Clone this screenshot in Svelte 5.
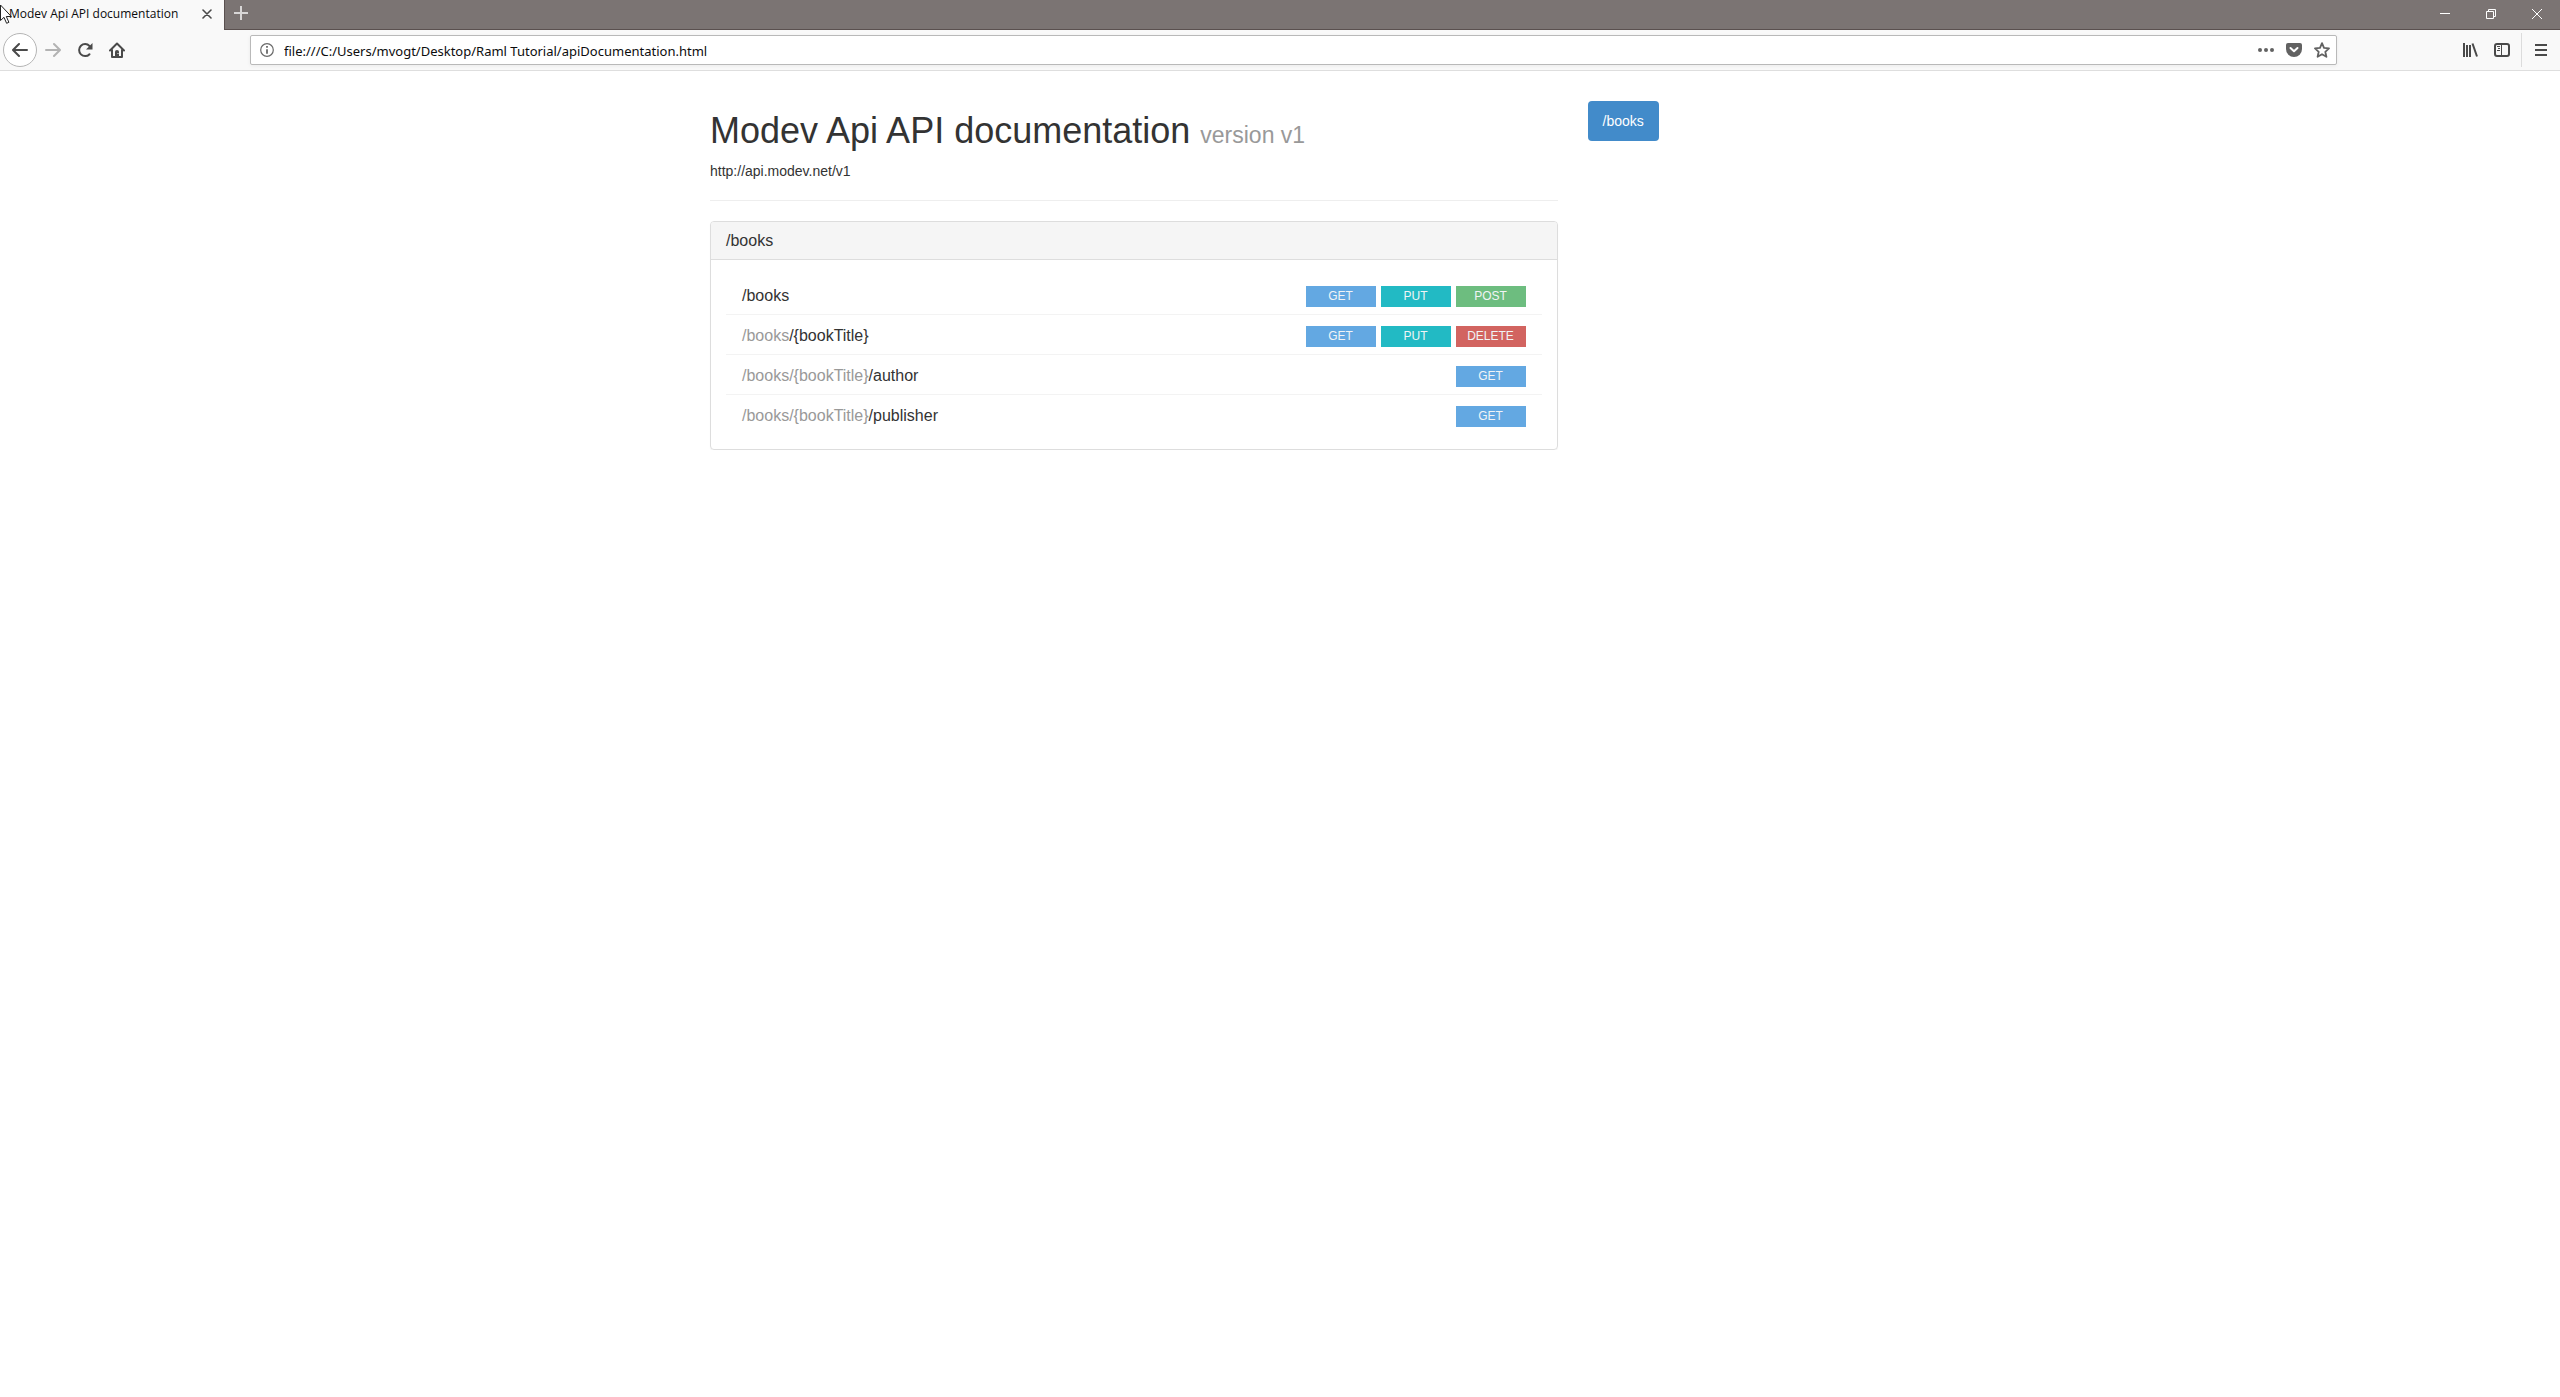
<script>
  const resources = [
    { parent: '', path: '/books', methods: ['GET', 'PUT', 'POST'] },
    { parent: '/books', path: '/{bookTitle}', methods: ['GET', 'PUT', 'DELETE'] },
    { parent: '/books/{bookTitle}', path: '/author', methods: ['GET'] },
    { parent: '/books/{bookTitle}', path: '/publisher', methods: ['GET'] }
  ];
  let address = $state('file:///C:/Users/mvogt/Desktop/Raml Tutorial/apiDocumentation.html');
</script>

<div class="browser">
  <header>
    <div class="tabs">
      <div class="tab">
        <span class="tab-title">Modev Api API documentation</span>
        <button class="tab-close" aria-label="Close tab">
          <svg width="10" height="10" viewBox="0 0 10 10"><path d="M1 1l8 8M9 1l-8 8" stroke="#4a4a4a" stroke-width="1.6" stroke-linecap="round" /></svg>
        </button>
      </div>
      <div class="strip">
        <button class="new-tab" aria-label="New tab">
          <svg width="14" height="14" viewBox="0 0 14 14"><path d="M7 0v14M0 7h14" stroke="#d8d6d6" stroke-width="2" /></svg>
        </button>
        <div class="window-buttons">
          <button aria-label="Minimize">
            <svg width="10" height="10" viewBox="0 0 10 10"><path d="M0 4.5h10" stroke="#fff" /></svg>
          </button>
          <button aria-label="Restore">
            <svg width="10" height="10" viewBox="0 0 10 10" fill="none" stroke="#fff"><path d="M.5 2.5h7v7h-7zM2.500 2.500V.5h7v7h-2" /></svg>
          </button>
          <button aria-label="Close window">
            <svg width="10" height="10" viewBox="0 0 10 10"><path d="M0 0l10 10M10 0L0 10" stroke="#fff" /></svg>
          </button>
        </div>
      </div>
    </div>

    <div class="toolbar">
      <nav class="history" aria-label="Browser navigation">
        <button class="back" aria-label="Back">
          <svg width="16" height="16" viewBox="0 0 16 16" fill="none" stroke="#4a4a4a" stroke-width="2" stroke-linecap="round" stroke-linejoin="round"><path d="M15 8H1.500M7 2L1 8l6 6" /></svg>
        </button>
        <button aria-label="Forward">
          <svg width="16" height="16" viewBox="0 0 16 16" fill="none" stroke="#b3b3b3" stroke-width="2" stroke-linecap="round" stroke-linejoin="round"><path d="M1 8h13.500M9 2l6 6-6 6" /></svg>
        </button>
        <button aria-label="Reload">
          <svg width="16" height="16" viewBox="0 0 16 16"><path d="M12.500 12.200A6 6 0 1 1 12.500 4" fill="none" stroke="#4a4a4a" stroke-width="2" stroke-linecap="round" /><path d="M15.500 1v6.500H9z" fill="#4a4a4a" /></svg>
        </button>
        <button aria-label="Home">
          <svg width="16" height="16" viewBox="0 0 16 16"><path d="M1 8.500L8 1.500l7 7M3 8v7h10V8" fill="none" stroke="#4a4a4a" stroke-width="2" stroke-linecap="round" stroke-linejoin="round" /><path d="M6 15V9.500Q6 8 8 8t2 1.500V15z" fill="#4a4a4a" /><path d="M8.500 11.500h1" stroke="#f9f9f9" /></svg>
        </button>
      </nav>

      <div class="urlbar">
        <svg width="14" height="14" viewBox="0 0 14 14" aria-hidden="true"><circle cx="7" cy="7" r="6.300" fill="none" stroke="#6a6a6a" stroke-width="1.200" /><path d="M7 6.200v4.600M7 3v1.800" stroke="#6a6a6a" stroke-width="1.800" /></svg>
        <input type="text" aria-label="Address" bind:value={address} />
        <div class="page-actions">
          <button aria-label="Page actions">
            <svg width="16" height="16" viewBox="0 0 16 16" fill="#626262"><circle cx="2" cy="8" r="2" /><circle cx="8" cy="8" r="2" /><circle cx="14" cy="8" r="2" /></svg>
          </button>
          <button aria-label="Save to Pocket">
            <svg width="16" height="16" viewBox="0 0 16 16"><path d="M2 1h12q2 0 2 2v4a8 8 0 0 1-16 0V3q0-2 2-2z" fill="#626262" /><path d="M4.500 6L8 9.300 11.500 6" fill="none" stroke="#fff" stroke-width="2" stroke-linecap="round" stroke-linejoin="round" /></svg>
          </button>
          <button aria-label="Bookmark this page">
            <svg width="16" height="16" viewBox="0 0 16 16"><path d="M8 1.200l2 4.700 5 .5-3.700 3.400 1.100 5L8 12.200l-4.400 2.600 1.100-5L1 6.400l5-.5z" fill="none" stroke="#626262" stroke-width="1.800" stroke-linejoin="round" /></svg>
          </button>
        </div>
      </div>

      <div class="tools">
        <button aria-label="Library">
          <svg width="16" height="16" viewBox="0 0 16 16" fill="none" stroke="#4a4a4a" stroke-width="2"><path d="M2 1v14M5 3v12M8 3v12M10.500 1.500l4.500 13" /></svg>
        </button>
        <button aria-label="Sidebars">
          <svg width="16" height="16" viewBox="0 0 16 16" fill="none" stroke="#4a4a4a"><rect x="1" y="2" width="14" height="12" rx="2" stroke-width="2" /><path d="M7.500 3v10M3 4.500h3M4 6.500h2M3 8.500h3" /></svg>
        </button>
        <span class="divider"></span>
        <button aria-label="Menu">
          <svg width="12" height="14" viewBox="0 0 12 14"><path d="M0 2h12M0 7h12M0 12h12" stroke="#4a4a4a" stroke-width="2" /></svg>
        </button>
      </div>
    </div>
    <svg class="pointer" width="13" height="20" viewBox="0 0 13 20" aria-hidden="true"><path d="M.5 1v15.500l3.500-3.200 2.600 6 2.300-1-2.600-5.800h5z" fill="#fff" stroke="#222" /></svg>
  </header>

  <div class="container">
    <main>
      <div class="page-header">
        <h1>Modev Api API documentation <small>version v1</small></h1>
        <p>http://api.modev.net/v1</p>
      </div>

      <section class="panel">
        <h2>/books</h2>
        <div class="panel-body">
          {#each resources as { parent, path, methods }}
            <div class="resource">
              <a class="path" href="#books"><span class="parent">{parent}</span>{path}</a>
              <div class="methods">
                {#each methods as method}
                  <button class="badge {method.toLowerCase()}">{method}</button>
                {/each}
              </div>
            </div>
          {/each}
        </div>
      </section>
    </main>

    <aside>
      <a class="pill" href="#books">/books</a>
    </aside>
  </div>
</div>

<style>
  :global(body) {
    margin: 0;
    background: #fff;
  }
  .browser {
    font: 14px/20px 'Liberation Sans', Arial, sans-serif;
    color: #333;
  }
  .browser * {
    box-sizing: border-box;
  }
  button {
    display: flex;
    align-items: center;
    justify-content: center;
    padding: 0;
    border: 0;
    background: none;
    font: inherit;
    color: inherit;
    flex: none;
  }
  svg {
    display: block;
    flex: none;
  }
  a {
    color: inherit;
    text-decoration: none;
  }

  header {
    position: relative;
    background: #f9f9f9;
    border-bottom: 1px solid #dedede;
  }
  .pointer {
    position: absolute;
    left: 0;
    top: 4px;
  }
  .tabs {
    display: flex;
    height: 30px;
  }
  .tab {
    display: flex;
    align-items: center;
    justify-content: space-between;
    width: 224px;
    padding: 0 8px 2px 9px;
    font: 12px/16px 'Open Sans', sans-serif;
    color: #0c0c0d;
    white-space: nowrap;
  }
  .tab-close {
    width: 18px;
    height: 18px;
  }
  .strip {
    flex: 1;
    display: flex;
    justify-content: space-between;
    background: #7b7473;
    border-bottom: 1px solid #5a504f;
    border-left: 1px solid #5a504f;
  }
  .new-tab {
    width: 32px;
    height: 26px;
  }
  .window-buttons {
    display: flex;
  }
  .window-buttons button {
    width: 46px;
    height: 28px;
  }

  .toolbar {
    display: flex;
    align-items: center;
    height: 40px;
    padding: 0 3px;
  }
  .history {
    display: flex;
    align-items: center;
    width: 247px;
  }
  .history button {
    width: 32px;
    height: 32px;
  }
  .history .back {
    width: 34px;
    height: 34px;
    border: 1px solid #b5b5b5;
    border-radius: 50%;
    background: #fff;
  }
  .urlbar {
    flex: 1;
    display: flex;
    align-items: center;
    height: 30px;
    padding: 0 6px 0 9px;
    gap: 10px;
    border: 1px solid #b9b9b9;
    border-radius: 2px;
    background: #fff;
    box-shadow: 0 1px 4px rgba(0, 0, 0, 0.06);
  }
  .urlbar input {
    flex: 1;
    min-width: 0;
    height: 26px;
    padding: 2px 0 0;
    border: 0;
    outline: 0;
    background: none;
    font: 13px/20px 'Noto Sans', sans-serif;
    color: #0c0c0d;
  }
  .page-actions {
    display: flex;
    gap: 12px;
  }
  .tools {
    display: flex;
    align-items: center;
    justify-content: flex-end;
    width: 220px;
  }
  .tools button {
    width: 32px;
    height: 32px;
  }
  .divider {
    width: 1px;
    height: 34px;
    margin: 0 3px;
    background: #dcdcdc;
  }

  .container {
    display: flex;
    max-width: 1170px;
    margin: 0 auto;
  }
  main {
    width: 75%;
    padding: 0 15px;
  }
  aside {
    width: 25%;
    padding: 30px 15px 0;
  }
  .page-header {
    margin: 40px 0 20px;
    padding-bottom: 19px;
    border-bottom: 1px solid #eee;
  }
  h1 {
    margin: 0 0 10px;
    font-size: 36px;
    line-height: 40px;
    font-weight: 400;
  }
  h1 small {
    font-size: 23px;
    line-height: 23px;
    color: #999;
  }
  p {
    margin: 0;
  }
  .panel {
    border: 1px solid #ddd;
    border-radius: 4px;
    box-shadow: 0 1px 1px rgba(0, 0, 0, 0.05);
  }
  h2 {
    margin: 0;
    padding: 10px 15px;
    font-size: 16px;
    line-height: 17px;
    font-weight: 400;
    background: #f5f5f5;
    border-bottom: 1px solid #ddd;
    border-radius: 3px 3px 0 0;
  }
  .panel-body {
    padding: 15px;
  }
  .resource {
    display: flex;
    justify-content: space-between;
    padding: 11px 16px 7px;
    border-bottom: 1px solid #f3f3f3;
  }
  .resource:last-child {
    border-bottom: 0;
  }
  .path {
    font-size: 16px;
    line-height: 19px;
  }
  .parent {
    color: #999;
  }
  .methods {
    display: flex;
    gap: 5px;
  }
  .badge {
    width: 70px;
    height: 21px;
    font-size: 12px;
    line-height: 21px;
    color: #f0f4f6;
  }
  .get {
    background: #63a8e2;
  }
  .put {
    background: #22bac4;
  }
  .post {
    background: #6dbd7f;
  }
  .delete {
    background: #d26460;
  }
  .pill {
    display: inline-block;
    padding: 10px 15px;
    border-radius: 4px;
    background: #428bca;
    color: #fff;
  }
</style>
